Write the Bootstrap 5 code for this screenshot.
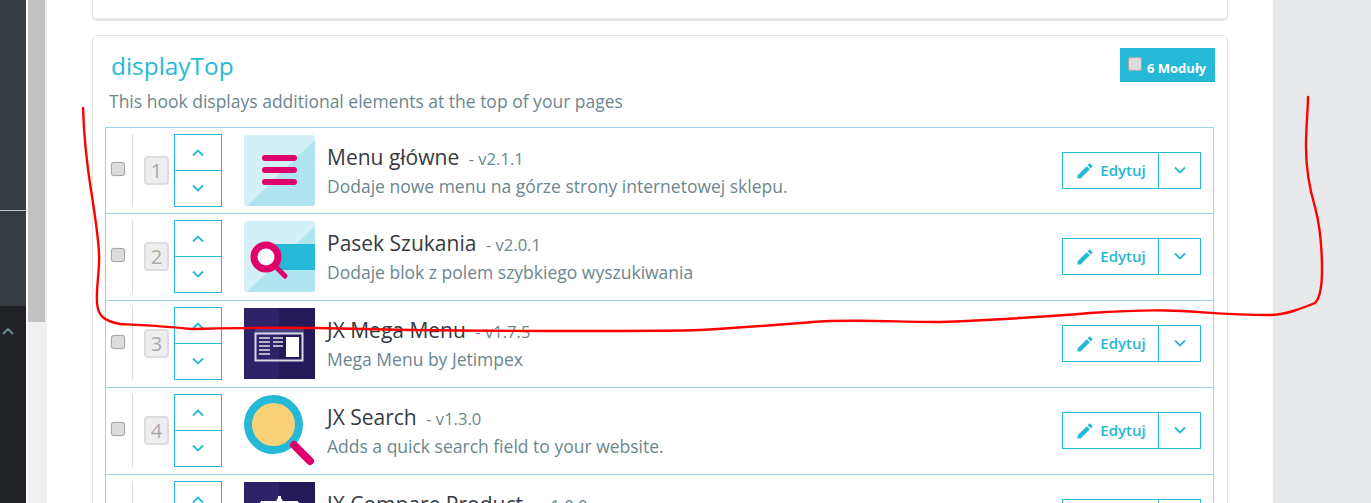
<!DOCTYPE html>
<html lang="pl">
<head>
    <meta charset="UTF-8">
    <title>Pozycje modułów</title>
    <link href="https://cdn.jsdelivr.net/npm/bootstrap@5.3.0/dist/css/bootstrap.min.css" rel="stylesheet">
    <style>
        body { font-family: "Open Sans", "Liberation Sans", sans-serif; color: #363a41; background: #fff; overflow: hidden; }
        .page-wrap { height: 503px; overflow: hidden; position: relative; }
        .side-menu { width: 26px; background: #202226; }
        .side-top { height: 306px; background: #363a41; padding-top: 210px; }
        .side-line { height: 1px; background: #bbcdd2; }
        .side-up { padding: 11px 0 0 1px; color: #6c868e; }
        .fake-scroll { width: 17px; margin-left: 2px; background: #f0f0f0; }
        .fake-thumb { height: 322px; background: #c1c1c1; }
        .main-area { width: 1228px; border-left: 2px solid #eaf0f1; padding: 0 45px 0 45px; }
        .gutter { background: #e8e9eb; }
        .panel-old { height: 21px; border: 1px solid #e5e5e5; border-top: 0; border-bottom-width: 3px; border-radius: 0 0 5px 5px; margin-bottom: 14px; }
        .panel-hook { border: 1px solid #e5e5e5; border-radius: 5px; padding: 12px 13px 0 12px; }
        .hook-title { font-size: 24.4px; line-height: 33px; font-weight: 400; color: #25b9d7; margin: 1px 0 0 6px; }
        .hook-desc { font-size: 17.5px; line-height: 22px; color: #6c868e; margin: 8px 0 15px 4px; }
        .hook-count { width: 95px; height: 34px; background: #25b9d7; color: #fff; font-size: 13px; font-weight: 700; margin-right: -1px; padding: 5px 0 0 8px; line-height: 22px; gap: 5px; }
        .fake-check { appearance: none; display: block; flex: none; width: 14px; height: 14px; margin: 0 0 3px; background: #dcdcdc; border: 1px solid #a6a6a6; border-radius: 3px; box-shadow: 0 0 1px #bbb; }
        .hook-count .fake-check { margin-bottom: 8px; }
        .module-list { --bs-list-group-border-radius: 0; }
        .module-row { height: 87px; padding: 0 12px 0 5px; display: flex; align-items: center; border-color: #9fd3e8; }
        .module-row + .module-row { padding-bottom: 1px; }
        .row-sep { width: 1px; height: 73px; background: #ddd; margin-left: 7px; }
        .pos-num { width: 25px; height: 29px; margin-left: 11px; background: #eee; border: 2px solid #ddd; border-radius: 4px; color: #aaa; font-size: 20px; line-height: 25px; text-align: center; flex: none; }
        .move-group { margin-left: 5px; width: 48px; flex: none; }
        .move-btn { height: 37px; padding: 0; border: 1px solid #25b9d7; border-radius: 0 !important; background: #fff; color: #25b9d7; display: flex; align-items: center; justify-content: center; }
        .move-btn + .move-btn { margin-top: -1px !important; }
        .mod-icon { width: 71px; height: 71px; margin-left: 22px; flex: none; display: block; }
        .mod-text { margin-left: 12px; }
        .mod-name { font-size: 21px; line-height: 27px; color: #363a41; }
        .mod-ver { font-size: 16.6px; color: #6c868e; margin-left: 4px; }
        .mod-desc { font-size: 17.5px; line-height: 22px; color: #6c868e; margin-top: 3px; }
        .edit-btn { height: 37px; padding: 0; border: 1px solid #25b9d7; border-radius: 0 !important; background: #fff; color: #25b9d7; font-size: 15px; font-weight: 600; display: flex; align-items: center; justify-content: center; gap: 5px; }
        .edit-main { width: 97px; flex: none; }
        .edit-more { width: 43px; flex: none; margin-left: -1px !important; }
        .red-mark { position: absolute; left: 0; top: 0; pointer-events: none; }
    </style>
</head>
<body>
<div class="page-wrap d-flex">
    <div class="side-menu flex-shrink-0">
        <div class="side-top"><div class="side-line"></div></div>
        <div class="side-up">
            <svg width="14" height="10" viewBox="0 0 14 10"><polyline points="2,8 7,3 12,8" fill="none" stroke="currentColor" stroke-width="2"/></svg>
        </div>
    </div>
    <div class="fake-scroll flex-shrink-0"><div class="fake-thumb"></div></div>
    <div class="main-area flex-shrink-0">
        <div class="panel-old"></div>
        <div class="panel-hook">
            <div class="d-flex justify-content-between align-items-start">
                <div class="hook-title">displayTop</div>
                <div class="hook-count d-flex align-items-center"><input type="checkbox" class="fake-check"><span>6 Moduły</span></div>
            </div>
            <div class="hook-desc">This hook displays additional elements at the top of your pages</div>
            <div class="list-group module-list" id="modules"></div>
        </div>
    </div>
    <div class="gutter flex-grow-1"></div>

    <svg class="red-mark" width="1371" height="503" viewBox="0 0 1371 503">
        <path fill="none" stroke="#f00" stroke-width="2.4" stroke-linejoin="round" stroke-linecap="round" d="M83 108C84 140 87 165 91 190S98 235 99 253S96 285 97 303C98 316 104 321 120 324C140 325 165 326 191 329C240 328 280 327 317 328S440 331 554 331S680 331 700 330C740 328 775 325 812 322S900 322 941 322C990 320 1033 318 1090 313C1120 311 1145 310 1166 310.5C1195 311 1225 315 1270 315C1285 315 1300 309 1315 303C1320 298 1322 285 1322 270C1322 245 1319 222 1315 207C1309 187 1306 170 1306 147C1306 125 1308 110 1308 97"/>
    </svg>
</div>

<script>
    var chevUp = '<svg width="14" height="9" viewBox="0 0 14 9"><polyline points="2,7.5 7,2.5 12,7.5" fill="none" stroke="currentColor" stroke-width="1.8"/></svg>';
    var chevDown = '<svg width="14" height="9" viewBox="0 0 14 9"><polyline points="2,1.5 7,6.5 12,1.5" fill="none" stroke="currentColor" stroke-width="1.8"/></svg>';
    var pencil = '<svg width="20" height="20" viewBox="0 0 24 24" fill="currentColor"><path d="M3 17.25V21h3.75L17.81 9.94l-3.75-3.75L3 17.25zM20.71 7.04a1 1 0 0 0 0-1.41l-2.34-2.34a1 1 0 0 0-1.41 0l-1.83 1.83 3.75 3.75 1.83-1.83z"/></svg>';

    var lightBg = '<rect width="71" height="71" rx="3" fill="#d2f0f6"/><path d="M71 5V68a3 3 0 0 1-3 3H3z" fill="#b0e4f0"/>';
    var darkBg = '<rect width="71" height="71" fill="#241a5a"/><rect width="35" height="71" fill="#2e2368"/>';

    var icons = {
        menu: lightBg + '<g stroke="#e0006c" stroke-width="6" stroke-linecap="round"><line x1="21" y1="23" x2="50" y2="23"/><line x1="21" y1="35" x2="50" y2="35"/><line x1="21" y1="47" x2="50" y2="47"/></g>',
        search: lightBg + '<rect x="26" y="23" width="45" height="26" fill="#25b9d7"/><circle cx="22" cy="36" r="12" fill="#fff" stroke="#e0006c" stroke-width="7"/><line x1="31" y1="45" x2="41" y2="55" stroke="#e0006c" stroke-width="5" stroke-linecap="round"/>',
        mega: darkBg + '<rect x="11" y="19" width="49" height="6" fill="#4a4080"/><rect x="11.5" y="25.5" width="47" height="27" fill="none" stroke="#d8d8e6" stroke-width="2"/><rect x="42" y="29" width="13" height="20" fill="#fff"/><g stroke="#e4e4ee" stroke-width="1.5"><line x1="15" y1="30" x2="26" y2="30"/><line x1="15" y1="34" x2="26" y2="34"/><line x1="15" y1="38" x2="26" y2="38"/><line x1="15" y1="42" x2="26" y2="42"/><line x1="15" y1="46" x2="26" y2="46"/><line x1="29" y1="30" x2="39" y2="30"/><line x1="29" y1="34" x2="39" y2="34"/><line x1="29" y1="38" x2="39" y2="38"/></g>',
        lens: '<circle cx="29.5" cy="29.5" r="25.5" fill="#fad176" stroke="#25b9d7" stroke-width="8"/><line x1="50" y1="50" x2="66" y2="66" stroke="#e0006c" stroke-width="8" stroke-linecap="round"/>',
        compare: darkBg + '<line x1="17" y1="20" x2="54" y2="20" stroke="#fff" stroke-width="2"/><line x1="35.5" y1="14" x2="35.5" y2="40" stroke="#fff" stroke-width="3"/><circle cx="35.5" cy="19" r="3" fill="#fff"/><path d="M17 20l-6 14h12zM54 20l-6 14h12z" fill="none" stroke="#fff" stroke-width="1"/>'
    };

    var modules = [
        { name: 'Menu główne', ver: 'v2.1.1', desc: 'Dodaje nowe menu na górze strony internetowej sklepu.', icon: 'menu' },
        { name: 'Pasek Szukania', ver: 'v2.0.1', desc: 'Dodaje blok z polem szybkiego wyszukiwania', icon: 'search' },
        { name: 'JX Mega Menu', ver: 'v1.7.5', desc: 'Mega Menu by Jetimpex', icon: 'mega' },
        { name: 'JX Search', ver: 'v1.3.0', desc: 'Adds a quick search field to your website.', icon: 'lens' },
        { name: 'JX Compare Product', ver: 'v1.0.0', desc: 'Compare products', icon: 'compare' }
    ];

    var html = '';
    modules.forEach(function (m, i) {
        html += '<div class="list-group-item module-row">' +
            '<input type="checkbox" class="fake-check">' +
            '<div class="row-sep"></div>' +
            '<div class="pos-num">' + (i + 1) + '</div>' +
            '<div class="btn-group-vertical move-group">' +
                '<button class="btn move-btn">' + chevUp + '</button>' +
                '<button class="btn move-btn">' + chevDown + '</button>' +
            '</div>' +
            '<svg class="mod-icon" viewBox="0 0 71 71">' + icons[m.icon] + '</svg>' +
            '<div class="mod-text">' +
                '<div class="mod-name">' + m.name + ' <span class="mod-ver">- ' + m.ver + '</span></div>' +
                '<div class="mod-desc">' + m.desc + '</div>' +
            '</div>' +
            '<div class="btn-group ms-auto">' +
                '<button class="btn edit-btn edit-main">' + pencil + 'Edytuj</button>' +
                '<button class="btn edit-btn edit-more">' + chevDown + '</button>' +
            '</div>' +
        '</div>';
    });
    document.getElementById('modules').innerHTML = html;
</script>
<script src="https://cdn.jsdelivr.net/npm/bootstrap@5.3.0/dist/js/bootstrap.bundle.min.js"></script>
</body>
</html>
